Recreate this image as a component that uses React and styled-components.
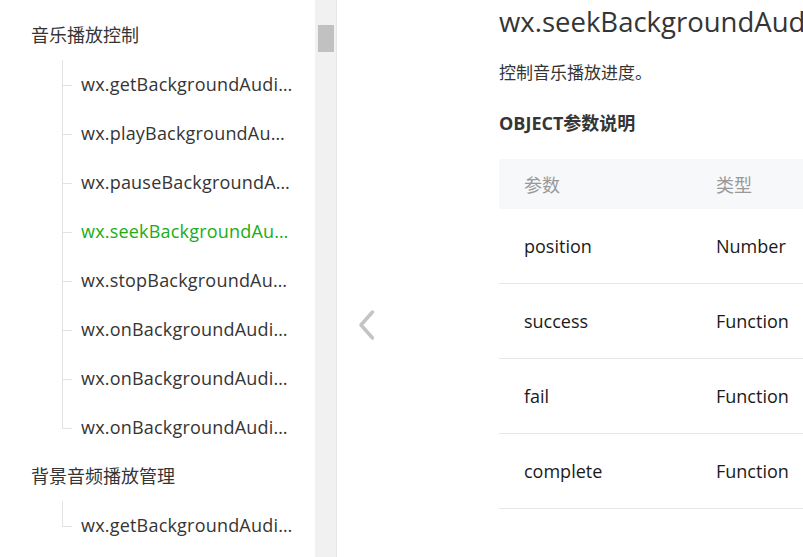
import React from "react";
import styled, { createGlobalStyle } from "styled-components";

const GlobalStyle = createGlobalStyle`
  html, body {
    margin: 0;
    padding: 0;
    background: #fff;
  }
  body {
    font-family: "Open Sans", "Noto Sans CJK SC", sans-serif;
    color: #353535;
  }
`;

const groups = [
  {
    title: "音乐播放控制",
    items: [
      "wx.getBackgroundAudioPlayerState",
      "wx.playBackgroundAudio",
      "wx.pauseBackgroundAudio",
      "wx.seekBackgroundAudio",
      "wx.stopBackgroundAudio",
      "wx.onBackgroundAudioPlay",
      "wx.onBackgroundAudioPause",
      "wx.onBackgroundAudioStop",
    ],
  },
  {
    title: "背景音频播放管理",
    items: ["wx.getBackgroundAudioManager"],
  },
];

const params = [
  { name: "position", type: "Number" },
  { name: "success", type: "Function" },
  { name: "fail", type: "Function" },
  { name: "complete", type: "Function" },
];

const App = () => {
  return (
    <Page>
      <GlobalStyle />
      <Sidebar>
        <Nav>
          {groups.map((g) => (
            <Group key={g.title}>
              <GroupTitle>{g.title}</GroupTitle>
              {g.items.map((item, i) => (
                <NavItem
                  key={item}
                  $active={item === "wx.seekBackgroundAudio"}
                  $last={i === g.items.length - 1}
                >
                  <span>{item}</span>
                </NavItem>
              ))}
            </Group>
          ))}
        </Nav>
        <ScrollTrack>
          <ScrollThumb />
        </ScrollTrack>
      </Sidebar>
      <Main>
        <PrevColumn>
          <svg width="20" height="32" viewBox="0 0 20 32">
            <path
              d="M15.5 3 L4 16 L15.5 29"
              fill="none"
              stroke="#c4c4c4"
              strokeWidth="3.5"
              strokeLinecap="round"
              strokeLinejoin="round"
            />
          </svg>
        </PrevColumn>
        <Content>
          <Title>wx.seekBackgroundAudio(OBJECT)</Title>
          <Desc>控制音乐播放进度。</Desc>
          <SubTitle>OBJECT参数说明</SubTitle>
          <Table>
            <colgroup>
              <NameCol />
              <col />
            </colgroup>
            <thead>
              <tr>
                <Th>参数</Th>
                <Th>类型</Th>
              </tr>
            </thead>
            <tbody>
              {params.map((p) => (
                <tr key={p.name}>
                  <Td>{p.name}</Td>
                  <Td>{p.type}</Td>
                </tr>
              ))}
            </tbody>
          </Table>
        </Content>
      </Main>
    </Page>
  );
};

const Page = styled.div`
  display: flex;
  height: 100vh;
  overflow: hidden;
`;

const Sidebar = styled.aside`
  display: flex;
  flex-shrink: 0;
  height: 100%;
`;

const Nav = styled.nav`
  width: 315px;
  padding-top: 11px;
  box-sizing: border-box;
  overflow: hidden;
`;

const Group = styled.div`
  display: flex;
  flex-direction: column;
`;

const GroupTitle = styled.div`
  height: 49px;
  line-height: 49px;
  padding-left: 31px;
  font-size: 18px;
  color: #353535;
`;

const NavItem = styled.div`
  position: relative;
  height: 49px;
  line-height: 49px;
  padding-left: 81px;
  padding-right: 20px;
  font-size: 18px;
  letter-spacing: 0.2px;
  color: ${(p) => (p.$active ? "#1aad19" : "#353535")};
  span {
    display: block;
    overflow: hidden;
    white-space: nowrap;
    text-overflow: ellipsis;
  }
  &::before {
    content: "";
    position: absolute;
    left: 62px;
    top: 0;
    width: 1px;
    height: ${(p) => (p.$last ? "50%" : "100%")};
    background: #e2e2e2;
  }
  &::after {
    content: "";
    position: absolute;
    left: 62px;
    top: 50%;
    width: 10px;
    height: 1px;
    background: #e2e2e2;
  }
`;

const ScrollTrack = styled.div`
  width: 21px;
  height: 100%;
  background: #f1f1f1;
  border-right: 1px solid #e6e6e6;
  display: flex;
  justify-content: center;
`;

const ScrollThumb = styled.div`
  width: 16px;
  height: 27px;
  margin-top: 25px;
  background: #c1c1c1;
`;

const Main = styled.main`
  flex: 1;
  display: flex;
  min-width: 0;
`;

const PrevColumn = styled.div`
  width: 162px;
  flex-shrink: 0;
  padding: 309px 0 0 20px;
  box-sizing: border-box;
`;

const Content = styled.div`
  flex: 1;
  min-width: 0;
  white-space: nowrap;
`;

const Title = styled.h1`
  margin: 3px 0 0;
  font-size: 27.5px;
  font-weight: 400;
  line-height: 38px;
  color: #353535;
`;

const Desc = styled.p`
  margin: 17px 0 0;
  font-size: 17px;
  line-height: 30px;
  color: #353535;
`;

const SubTitle = styled.h3`
  margin: 20px 0 0;
  font-size: 18px;
  font-weight: 700;
  line-height: 30px;
  color: #353535;
`;

const Table = styled.table`
  margin-top: 21px;
  border-collapse: collapse;
  table-layout: fixed;
  width: 600px;
`;

const NameCol = styled.col`
  width: 192px;
`;

const Th = styled.th`
  height: 50px;
  padding: 0 0 0 25px;
  background: #f7f8fa;
  text-align: left;
  font-size: 18px;
  font-weight: 400;
  color: #999;
`;

const Td = styled.td`
  height: 74px;
  padding: 0 0 0 25px;
  border-bottom: 1px solid #e6e6e6;
  font-size: 18px;
  color: #1a1a1a;
`;

export default App;
